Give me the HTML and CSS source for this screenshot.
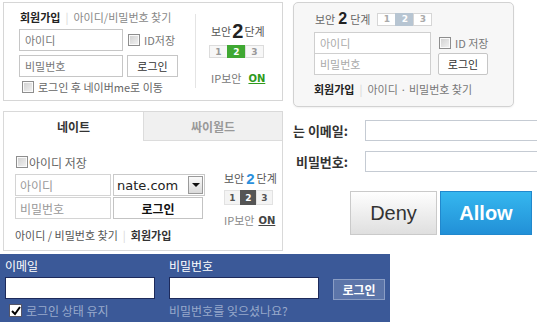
FILE: index.html
```html
<!DOCTYPE html>
<html>
<head>
	<meta charset="utf-8">
	<title>로그인 모음</title>
	<link rel="stylesheet" href="styles.css">
</head>
<body>
<div class="row row-top">
	<div class="nv">
		<div class="nv-main">
			<div class="nv-links"><b>회원가입</b><span class="sep">|</span><span>아이디/비밀번호 찾기</span></div>
			<div class="nv-line">
				<input class="field" placeholder="아이디">
				<span class="chk"><span class="cb"></span>ID저장</span>
			</div>
			<div class="nv-line">
				<input class="field" type="password" placeholder="비밀번호">
				<button class="nv-btn">로그인</button>
			</div>
			<div class="nv-keep"><span class="cb"></span>로그인 후 네이버me로 이동</div>
		</div>
		<div class="sec">
			<div class="sec-title">보안<strong>2</strong>단계</div>
			<div class="steps"><span>1</span><span class="on-green">2</span><span>3</span></div>
			<div class="ip">IP보안<a class="ip-on green">ON</a></div>
		</div>
	</div>

	<div class="nv2">
		<div class="nv2-title">보안<strong>2</strong>단계
			<div class="steps2"><span>1</span><span class="on-blue">2</span><span>3</span></div>
		</div>
		<div class="nv2-form">
			<div class="nv2-fields">
				<input class="field2" placeholder="아이디">
				<input class="field2" type="password" placeholder="비밀번호">
			</div>
			<div class="nv2-side">
				<span class="chk"><span class="cb"></span>ID 저장</span>
				<button class="nv2-btn">로그인</button>
			</div>
		</div>
		<div class="nv2-links"><b>회원가입</b><span class="sep">|</span><span>아이디 · 비밀번호 찾기</span></div>
	</div>
</div>

<div class="row row-mid">
	<div class="nate">
		<div class="tabs">
			<div class="tab">네이트</div>
			<div class="tab tab-off">싸이월드</div>
		</div>
		<div class="nate-body">
			<div class="nate-main">
				<div class="nate-save"><span class="cb"></span>아이디 저장</div>
				<div class="nate-grid">
					<input class="field3" placeholder="아이디">
					<div class="select">nate.com<span class="arrow"></span></div>
					<input class="field3" type="password" placeholder="비밀번호">
					<button class="nate-btn">로그인</button>
				</div>
				<div class="nate-links">아이디 / 비밀번호 찾기<span class="sep">|</span><b>회원가입</b></div>
			</div>
			<div class="nate-sec">
				<div class="nate-title">보안<strong>2</strong>단계</div>
				<div class="steps3"><span>1</span><span class="on-dark">2</span><span>3</span></div>
				<div class="ip ip3">IP보안<a class="ip-on">ON</a></div>
			</div>
		</div>
	</div>

	<div class="auth">
		<div class="auth-grid">
			<label>는 이메일:</label><input>
			<label>비밀번호:</label><input type="password">
		</div>
		<div class="auth-actions">
			<button class="deny">Deny</button>
			<button class="allow">Allow</button>
		</div>
	</div>
</div>

<div class="row row-bottom">
	<div class="fb">
		<div class="fb-col">
			<label>이메일</label>
			<input>
			<div class="fb-note">
				<span class="fb-cb"><svg width="10" height="10" viewBox="0 0 10 10"><path d="M1 5 L4 8 L9 1" fill="none" stroke="#000" stroke-width="2"/></svg></span>로그인 상태 유지
			</div>
		</div>
		<div class="fb-col fb-col-pw">
			<label>비밀번호</label>
			<input type="password">
			<div class="fb-note">비밀번호를 잊으셨나요?</div>
		</div>
		<button class="fb-btn">로그인</button>
	</div>
</div>
</body>
</html>
```

FILE: styles.css
```css
*{
	box-sizing: border-box;
}
html, body{
	margin: 0;
	padding: 0;
}
body{
	width: 537px;
	height: 328px;
	overflow: hidden;
	background: #fff;
	font-family: "Noto Sans CJK KR", "Liberation Sans", sans-serif;
	font-size: 11px;
	color: #666;
}
input{
	font-family: inherit;
	font-size: 11px;
	margin: 0;
	outline: none;
	background: #fff;
}
button{
	font-family: inherit;
	margin: 0;
	padding: 0;
	cursor: pointer;
}
.row{
	display: flex;
	align-items: flex-start;
}
.row-top{
	padding: 2px 0 0 3px;
}
.row-mid{
	margin-top: 4px;
	padding-left: 3px;
}
.row-bottom{
	margin-top: 3px;
}

/* checkbox */
.cb{
	display: inline-block;
	width: 12px;
	height: 12px;
	border: 1px solid #8e8e8e;
	background: linear-gradient(135deg, #cfcfcf, #f3f3f3);
	box-shadow: inset 0 0 0 1px #fafafa;
	flex: none;
}
.sep{
	color: #d6d6d6;
	margin: 0 5px;
}

/* naver 1 */
.nv{
	width: 280px;
	height: 99px;
	border: 1px solid #d6d6d6;
	display: flex;
	background: #fff;
}
.nv-main{
	width: 191px;
	padding: 6px 0 0 15px;
}
.nv-links{
	height: 16px;
	line-height: 16px;
	display: flex;
	align-items: center;
	color: #888;
	padding-left: 1px;
}
.nv-links b{
	color: #222;
}
.nv-line{
	display: flex;
	align-items: center;
	margin-top: 4px;
	height: 22px;
}
.field{
	width: 104px;
	height: 22px;
	border: 1px solid #c6c6c6;
	padding: 0 5px;
	color: #555;
}
.field::placeholder{
	color: #777;
}
.chk{
	display: flex;
	align-items: center;
	margin-left: 5px;
	color: #777;
}
.chk .cb{
	margin-right: 4px;
}
.nv-btn{
	width: 51px;
	height: 22px;
	margin-left: 4px;
	border: 1px solid #c6c6c6;
	background: #fff;
	color: #333;
	font-size: 11px;
}
.nv-keep{
	margin-top: 3px;
	height: 13px;
	display: flex;
	align-items: center;
	padding-left: 3px;
	color: #666;
}
.nv-keep .cb{
	margin-right: 4px;
}
.sec{
	margin: 11px 0 12px;
	border-left: 1px solid #e4e4e4;
	padding: 8px 0 0 15px;
	flex: 1;
}
.sec-title{
	height: 18px;
	display: flex;
	align-items: center;
	color: #555;
}
.sec-title strong{
	font-family: "Liberation Sans", sans-serif;
	font-size: 20px;
	color: #222;
	margin: 0 1px;
}
.steps, .steps2, .steps3{
	display: flex;
}
.steps{
	margin: 5px 0 0 -1px;
}
.steps span, .steps2 span, .steps3 span{
	width: 19px;
	height: 13px;
	border: 1px solid #dcdcdc;
	margin-left: -1px;
	background: #f7f7f7;
	font: bold 9px "DejaVu Sans", sans-serif;
	color: #999;
	display: flex;
	align-items: center;
	justify-content: center;
}
.steps .on-green{
	background: #3fa832;
	border-color: #3fa832;
	color: #fff;
}
.ip{
	margin-top: 12px;
	height: 16px;
	display: flex;
	align-items: center;
	color: #777;
}
.ip-on{
	margin-left: 7px;
	font: bold 10px "DejaVu Sans", sans-serif;
	text-decoration: underline;
	color: #444;
}
.ip-on.green{
	color: #2f9a1c;
}

/* naver 2 */
.nv2{
	width: 221px;
	height: 105px;
	margin-left: 10px;
	border: 1px solid #d2d2d2;
	border-radius: 5px;
	background: #f7f7f7;
	padding: 8px 0 0 20px;
	box-shadow: 0 1px 2px rgba(0, 0, 0, 0.06);
}
.nv2-title{
	display: flex;
	align-items: center;
	height: 16px;
	color: #666;
	padding-left: 1px;
}
.nv2-title strong{
	font-family: "Liberation Sans", sans-serif;
	font-size: 16px;
	color: #222;
	margin: 0 3px;
}
.steps2{
	margin-left: 8px;
}
.steps2 span{
	background: #fff;
	border-color: #d6d6d6;
	color: #aaa;
}
.steps2 .on-blue{
	background: #b7c5d2;
	border-color: #b7c5d2;
	color: #fff;
}
.nv2-form{
	display: flex;
	margin-top: 5px;
}
.nv2-fields{
	display: flex;
	flex-direction: column;
	width: 117px;
}
.field2{
	height: 22px;
	border: 1px solid #cfcfcf;
	padding: 0 5px;
}
.field2 + .field2{
	margin-top: -1px;
}
.field2::placeholder{
	color: #aaa;
}
.nv2-side{
	display: flex;
	flex-direction: column;
	align-items: flex-start;
	padding-top: 5px;
}
.nv2-side .chk{
	margin-left: 8px;
	height: 12px;
}
.nv2-btn{
	margin: 4px 0 0 7px;
	width: 50px;
	height: 22px;
	border: 1px solid #c6c6c6;
	border-radius: 2px;
	background: #fff;
	color: #333;
	font-size: 11px;
}
.nv2-links{
	margin-top: 6px;
	height: 16px;
	display: flex;
	align-items: center;
	color: #777;
}
.nv2-links b{
	color: #222;
}

/* nate */
.nate{
	width: 281px;
	height: 140px;
	border: 1px solid #d9d9d9;
	background: #fff;
}
.tabs{
	display: flex;
	height: 29px;
}
.tab{
	width: 139px;
	display: flex;
	align-items: center;
	justify-content: center;
	font-weight: bold;
	font-size: 12px;
	color: #333;
}
.tab-off{
	flex: 1;
	background: #f0f0f0;
	border-left: 1px solid #dcdcdc;
	border-bottom: 1px solid #dcdcdc;
	color: #999;
}
.nate-body{
	display: flex;
	padding-left: 11px;
}
.nate-main{
	width: 205px;
}
.nate-save{
	margin-top: 15px;
	height: 12px;
	display: flex;
	align-items: center;
	padding-left: 1px;
	color: #666;
	font-size: 12px;
}
.nate-save .cb{
	margin-right: 1px;
}
.nate-grid{
	margin-top: 6px;
	display: grid;
	grid-template-columns: 96px 92px;
	grid-template-rows: 22px 22px;
	column-gap: 2px;
	row-gap: 1px;
}
.field3{
	height: 22px;
	border: 1px solid #d4d4d4;
	padding: 0 4px;
	font-size: 12px;
}
.field3::placeholder{
	color: #999;
}
.select{
	position: relative;
	border: 1px solid #c9c9c9;
	padding-left: 3px;
	font: 13px "DejaVu Sans", sans-serif;
	color: #222;
	display: flex;
	align-items: center;
}
.arrow{
	position: absolute;
	right: 1px;
	top: 1px;
	width: 15px;
	height: 18px;
	border: 1px solid #9a9a9a;
	background: linear-gradient(#fafafa, #dadada);
}
.arrow::after{
	content: "";
	position: absolute;
	left: 3px;
	top: 6px;
	border-left: 4px solid transparent;
	border-right: 4px solid transparent;
	border-top: 4px solid #111;
}
.nate-btn{
	width: 90px;
	height: 22px;
	border: 1px solid #c3c3c3;
	background: #fff;
	font-size: 12px;
	font-weight: bold;
	color: #111;
}
.nate-links{
	margin-top: 10px;
	height: 12px;
	display: flex;
	align-items: center;
	color: #555;
}
.nate-links b{
	color: #333;
}
.nate-sec{
	padding: 30px 0 0 4px;
}
.nate-title{
	height: 14px;
	display: flex;
	align-items: center;
	color: #555;
}
.nate-title strong{
	font-family: "Liberation Sans", sans-serif;
	font-size: 15px;
	color: #2b8fdc;
	margin: 0 2px;
}
.steps3{
	margin: 5px 0 0 1px;
}
.steps3 span{
	width: 17px;
	height: 15px;
	background: #f4f4f4;
	border-color: #e2e2e2;
	color: #555;
}
.steps3 .on-dark{
	background: #555;
	border-color: #555;
	color: #fff;
}
.ip3{
	margin-top: 8px;
	height: 14px;
	color: #888;
}
.ip3 .ip-on{
	margin-left: 4px;
}

/* email form */
.auth{
	margin-left: 7px;
	padding-top: 9px;
}
.auth-grid{
	display: grid;
	grid-template-columns: 58px 180px;
	column-gap: 17px;
	row-gap: 10px;
	align-items: center;
}
.auth-grid label{
	text-align: right;
	font-weight: bold;
	font-size: 13px;
	color: #333;
	white-space: nowrap;
}
.auth-grid input{
	height: 21px;
	border: 1px solid #c5cbd3;
}
.auth-actions{
	display: flex;
	gap: 3px;
	margin: 19px 0 0 60px;
}
.deny{
	width: 87px;
	height: 44px;
	border: 1px solid #cacaca;
	background: linear-gradient(#fefefe, #dfdfdf);
	font: 20px "Liberation Sans", sans-serif;
	color: #333;
}
.allow{
	width: 92px;
	height: 44px;
	border: 1px solid #2188cd;
	background: linear-gradient(#35b7ef, #2290d7);
	font: bold 20px "Liberation Sans", sans-serif;
	color: #fff;
}

/* blue bar */
.fb{
	width: 390px;
	height: 68px;
	background: #3b5998;
	display: flex;
	align-items: flex-start;
	padding: 4px 0 0 5px;
}
.fb-col{
	width: 164px;
	flex: none;
}
.fb-col-pw{
	width: 150px;
}
.fb-col label{
	display: block;
	color: #fff;
	font-size: 12px;
	height: 16px;
	line-height: 16px;
}
.fb-col input{
	display: block;
	width: 150px;
	height: 22px;
	border: 1px solid #1d2a5b;
	margin-top: 3px;
}
.fb-note{
	margin-top: 5px;
	height: 13px;
	display: flex;
	align-items: center;
	color: #98a9cb;
	font-size: 12px;
	white-space: nowrap;
}
.fb-cb{
	width: 13px;
	height: 13px;
	margin: 0 4px 0 4px;
	background: #fff;
	border: 1px solid #556;
	display: flex;
	align-items: center;
	justify-content: center;
}
.fb-btn{
	flex: none;
	margin: 21px 0 0 14px;
	width: 52px;
	height: 21px;
	background: #5c75a9;
	border: 1px solid #8a9dc4;
	color: #fff;
	font-weight: bold;
	font-size: 12px;
}
```
